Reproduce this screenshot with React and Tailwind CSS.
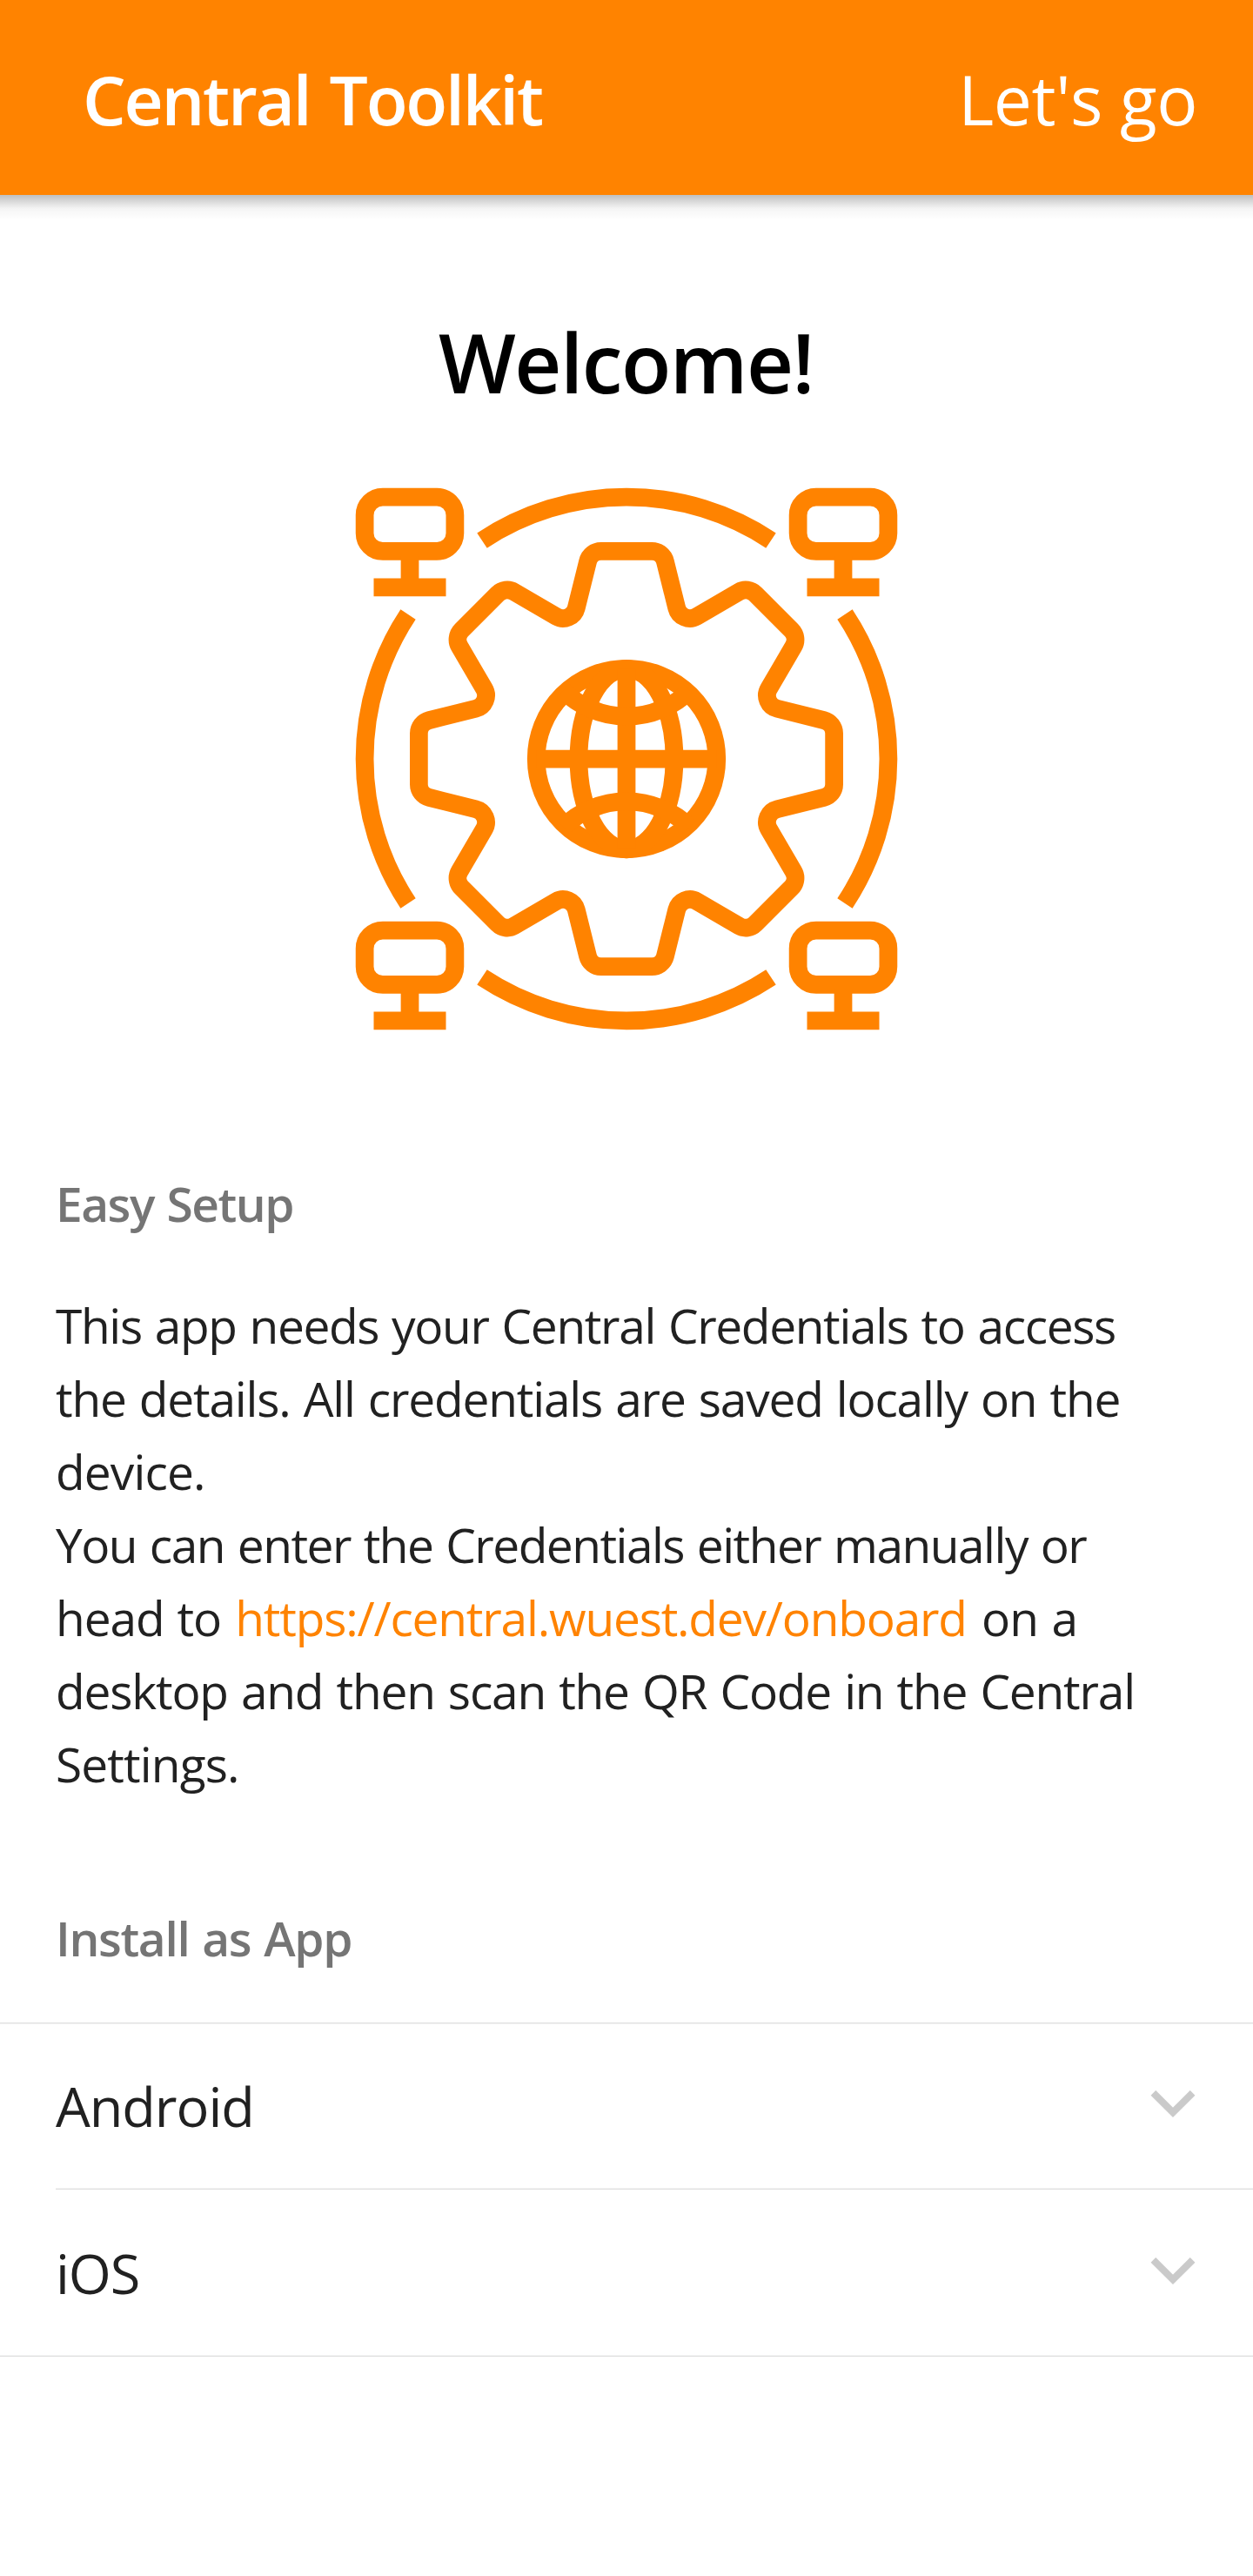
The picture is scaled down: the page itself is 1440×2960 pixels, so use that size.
import React from "react";

// Corner points of one quarter of the gear outline, clockwise from the top tooth.
const QUADRANT = [
  [4, -23],
  [6.05, -14.76],
  [13.45, -19.08],
  [19.08, -13.45],
  [14.76, -6.05],
  [23, -4],
];

const rotate = ([x, y], turns) => {
  let p = [x, y];
  for (let i = 0; i < turns; i++) p = [-p[1], p[0]];
  return p;
};

const GEAR_POINTS = [0, 1, 2, 3].flatMap((q) => QUADRANT.map((p) => rotate(p, q)));

// Closed outline with every corner rounded to the given radius.
function roundedPath(points, radius) {
  const n = points.length;
  const parts = points.map((p, i) => {
    const a = points[(i + n - 1) % n];
    const b = points[(i + 1) % n];
    const la = Math.hypot(p[0] - a[0], p[1] - a[1]);
    const lb = Math.hypot(b[0] - p[0], b[1] - p[1]);
    const u = [(p[0] - a[0]) / la, (p[1] - a[1]) / la];
    const v = [(b[0] - p[0]) / lb, (b[1] - p[1]) / lb];
    const cross = u[0] * v[1] - u[1] * v[0];
    const turn = Math.acos(u[0] * v[0] + u[1] * v[1]);
    const t = radius * Math.tan(turn / 2);
    const start = `${(p[0] - u[0] * t).toFixed(3)} ${(p[1] - u[1] * t).toFixed(3)}`;
    const end = `${(p[0] + v[0] * t).toFixed(3)} ${(p[1] + v[1] * t).toFixed(3)}`;
    return `${i ? "L" : "M"}${start}A${radius} ${radius} 0 0 ${cross > 0 ? 1 : 0} ${end}`;
  });
  return parts.join("") + "Z";
}

const GEAR_PATH = roundedPath(GEAR_POINTS, 1.5);

function Monitor({ x, y }) {
  return (
    <g transform={`translate(${x} ${y})`}>
      <rect x="1" y="1" width="10" height="6" rx="2" />
      <path d="M6 7.5V11M2 11H10" />
    </g>
  );
}

function NetworkGear() {
  return (
    <svg
      viewBox="-32 -32 64 64"
      className="mx-auto mt-[60px] block size-[664px] text-[#ff8300]"
      fill="none"
      stroke="currentColor"
      strokeWidth="2"
    >
      <Monitor x={-30} y={-30} />
      <Monitor x={18} y={-30} />
      <Monitor x={-30} y={18} />
      <Monitor x={18} y={18} />
      <path d="M-16 -24.19A29 29 0 0 1 16 -24.19" />
      <path d="M24.19 -16A29 29 0 0 1 24.19 16" />
      <path d="M16 24.19A29 29 0 0 1 -16 24.19" />
      <path d="M-24.19 16A29 29 0 0 1 -24.19 -16" />
      <path d={GEAR_PATH} />
      <circle r="10" />
      <ellipse rx="5.3" ry="10" />
      <path d="M0 -10V10M-10 0H10" />
      <path d="M-7 -7.56A10 10 0 0 0 7 -7.56M-7 7.56A10 10 0 0 1 7 7.56" />
    </svg>
  );
}

function Chevron() {
  return (
    <svg
      viewBox="0 0 56 32"
      className="mb-1 h-8 w-14 text-[#cacaca]"
      fill="none"
      stroke="currentColor"
      strokeWidth="8"
    >
      <path d="M5.4 2.8L28 25.4L50.6 2.8" />
    </svg>
  );
}

export default function App() {
  return (
    <div className="min-h-[2960px] w-[1440px] bg-white font-['Open_Sans',sans-serif] text-[#212121]">
      <header className="flex h-56 items-center justify-between bg-[#ff8300] pt-[5px] pr-[64px] pl-[95px] text-[78.5px] leading-none whitespace-nowrap text-white">
        <h1 className="font-semibold tracking-[-2.25px] [word-spacing:4px]">Central Toolkit</h1>
        <a className="tracking-[-0.4px]">Let's go</a>
      </header>
      <div className="h-8 bg-[linear-gradient(to_bottom,rgba(0,0,0,0.25)_0%,rgba(0,0,0,0.08)_40%,rgba(0,0,0,0.04)_50%,rgba(0,0,0,0)_90%)]" />

      <main>
        <h2 className="mt-24 h-32 pr-px text-center text-[94px] leading-[128px] font-semibold tracking-[-1.5px] text-black">
          Welcome!
        </h2>
        <NetworkGear />

        <h3 className="mt-[137px] pl-16 text-[55px] leading-[84px] font-semibold tracking-[-1.5px] text-[#757575] [word-spacing:2px]">
          Easy Setup
        </h3>
        <p className="mt-14 flex flex-col pl-16 text-[55px] leading-[84px] whitespace-nowrap [word-spacing:2px]">
          <span className="tracking-[-1.34px]">This app needs your Central Credentials to access</span>
          <span className="tracking-[-1.17px]">the details. All credentials are saved locally on the</span>
          <span className="tracking-[-0.85px]">device.</span>
          <span className="tracking-[-1.5px]">You can enter the Credentials either manually or</span>
          <span className="tracking-[-1.1px]">
            head to <a className="ml-px tracking-[-1.18px] text-[#ff8300]">https://central.wuest.dev/onboard</a>{" "}
            <span className="ml-[2px] tracking-[-0.9px]">on a</span>
          </span>
          <span className="tracking-[-1.17px]">desktop and then scan the QR Code in the Central</span>
          <span className="tracking-[-0.87px]">Settings.</span>
        </p>

        <h3 className="mt-[116px] pl-16 text-[55px] leading-[84px] font-semibold tracking-[-1.35px] text-[#757575] [word-spacing:2px]">
          Install as App
        </h3>
        <ul className="mt-[55px] text-[63px] leading-[96px] tracking-[-1.05px] shadow-[inset_0_1px_#dfdfdf,inset_0_2px_#f3f3f3,inset_0_-1px_#dfdfdf,inset_0_-2px_#f3f3f3]">
          <li className="pl-16">
            <div className="flex h-48 items-center justify-between pr-16 shadow-[inset_0_-1px_#dfdfdf,inset_0_-2px_#f3f3f3]">
              Android
              <Chevron />
            </div>
          </li>
          <li className="flex h-48 items-center justify-between px-16">
            iOS
            <Chevron />
          </li>
        </ul>
      </main>
    </div>
  );
}
